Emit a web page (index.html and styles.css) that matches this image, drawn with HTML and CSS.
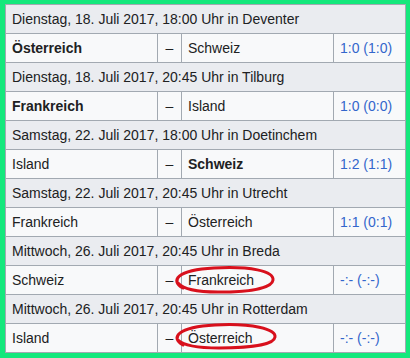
FILE: index.html
```html
<!DOCTYPE html>
<html lang="de">
<head>
<meta charset="utf-8">
<link rel="stylesheet" href="styles.css">
</head>
<body>
<div class="frame">
  <table class="matches">
    <colgroup>
      <col class="c-home"><col class="c-dash"><col class="c-away"><col class="c-score">
    </colgroup>
    <tr class="head"><td colspan="4">Dienstag, 18. Juli 2017, 18:00 Uhr in Deventer</td></tr>
    <tr class="match"><td><b>Österreich</b></td><td class="dash">–</td><td>Schweiz</td><td class="score">1:0 (1:0)</td></tr>
    <tr class="head"><td colspan="4">Dienstag, 18. Juli 2017, 20:45 Uhr in Tilburg</td></tr>
    <tr class="match"><td><b>Frankreich</b></td><td class="dash">–</td><td>Island</td><td class="score">1:0 (0:0)</td></tr>
    <tr class="head"><td colspan="4">Samstag, 22. Juli 2017, 18:00 Uhr in Doetinchem</td></tr>
    <tr class="match"><td>Island</td><td class="dash">–</td><td><b>Schweiz</b></td><td class="score">1:2 (1:1)</td></tr>
    <tr class="head"><td colspan="4">Samstag, 22. Juli 2017, 20:45 Uhr in Utrecht</td></tr>
    <tr class="match"><td>Frankreich</td><td class="dash">–</td><td>Österreich</td><td class="score">1:1 (0:1)</td></tr>
    <tr class="head"><td colspan="4">Mittwoch, 26. Juli 2017, 20:45 Uhr in Breda</td></tr>
    <tr class="match"><td>Schweiz</td><td class="dash">–</td><td>Frankreich</td><td class="score">-:- (-:-)</td></tr>
    <tr class="head"><td colspan="4">Mittwoch, 26. Juli 2017, 20:45 Uhr in Rotterdam</td></tr>
    <tr class="match"><td>Island</td><td class="dash">–</td><td>Österreich</td><td class="score">-:- (-:-)</td></tr>
  </table>
  <svg class="marks" width="410" height="358" viewBox="0 0 410 358" aria-hidden="true">
    <path d="M183 288 C170 281 176 270 214 268 C250 266 274 271 273 280 C272 289 247 292 218 292 C197 292 183 289 178 283" />
    <path d="M183 345 C170 338 177 327 215 325 C252 323 276 329 275 337 C274 345 248 348 219 348 C198 348 184 346 178 340" />
  </svg>
</div>
</body>
</html>
```

FILE: styles.css
```css
html, body {
  margin: 0;
  padding: 0;
}
body {
  width: 410px;
  height: 358px;
  background: #14e87c;
  font-family: "Liberation Sans", Arial, sans-serif;
  font-size: 14px;
  color: #202122;
}
.frame {
  position: relative;
  width: 410px;
  height: 358px;
  box-sizing: border-box;
  padding: 4px 5px 5px 5px;
}
.matches {
  width: 400px;
  table-layout: fixed;
  border-collapse: collapse;
  background: #f8f9fa;
}
.c-home { width: 152px; }
.c-dash { width: 24px; }
.c-away { width: 152px; }
.c-score { width: 72px; }
.matches td {
  border: 1px solid #a2a9b1;
  padding: 4px 6px;
  line-height: 20px;
  height: 20px;
  white-space: nowrap;
  overflow: hidden;
}
.head td {
  background: #eaecf0;
}
.match td {
  background: #f8f9fa;
}
.matches td.dash {
  text-align: center;
  padding: 4px 0;
}
.score {
  color: #3366cc;
}
.marks {
  position: absolute;
  left: 0;
  top: 0;
  pointer-events: none;
}
.marks path {
  fill: none;
  stroke: #d8101c;
  stroke-width: 3;
  stroke-linecap: round;
}
```
